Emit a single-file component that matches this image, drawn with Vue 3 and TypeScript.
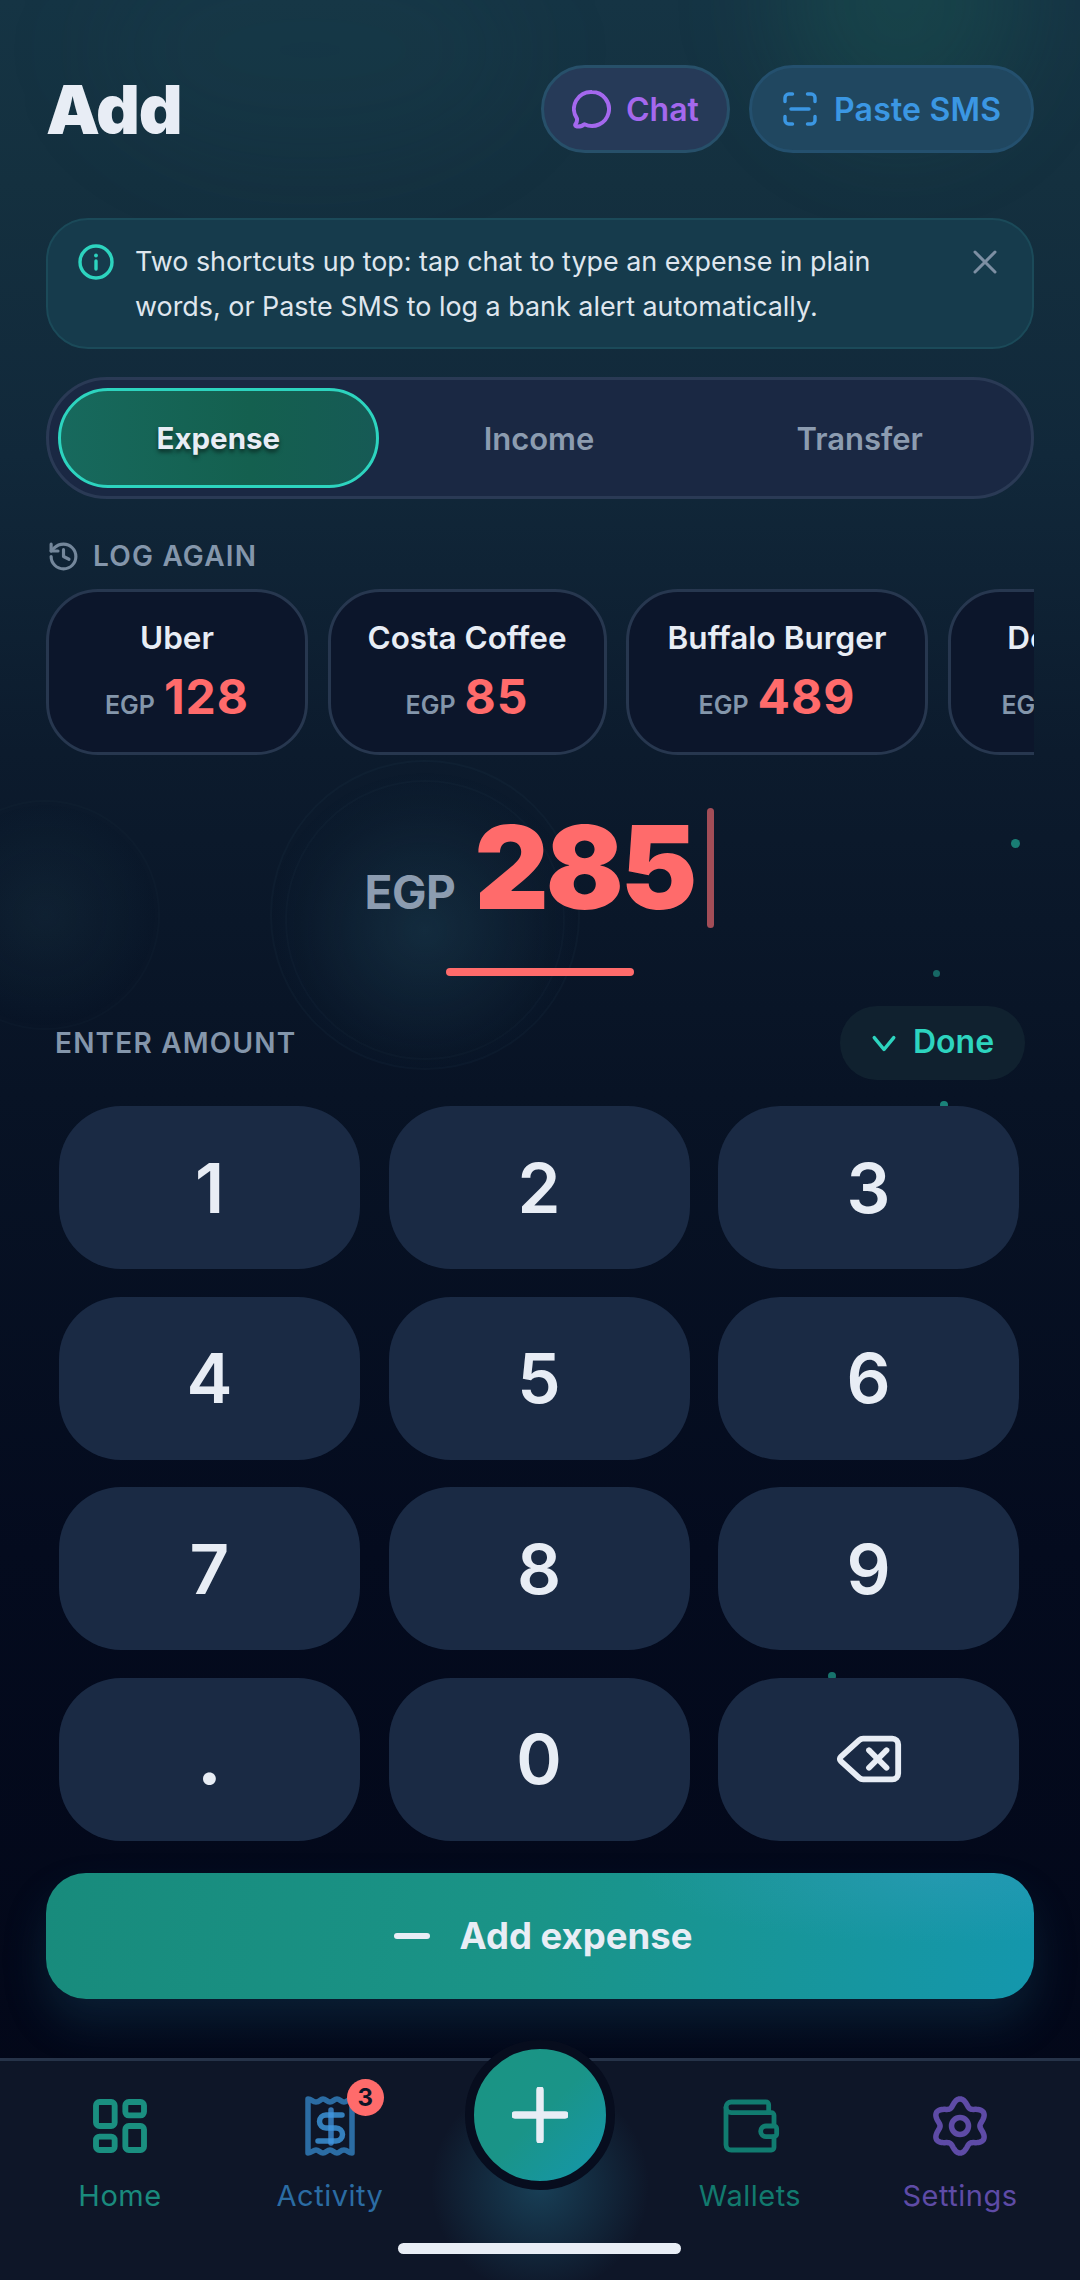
<script setup lang="ts">
const tabs: string[] = ['Expense', 'Income', 'Transfer']
const quick = [
  { name: 'Uber', amount: '128', w: 262 },
  { name: 'Costa Coffee', amount: '85', w: 279 },
  { name: 'Buffalo Burger', amount: '489', w: 302 },
  { name: 'Dominos', amount: '310', w: 254 },
]
const keys: string[] = ['1', '2', '3', '4', '5', '6', '7', '8', '9', '.', '0']
const dots = [
  { x: 1011, y: 839, s: 9, o: 0.75 },
  { x: 933, y: 970, s: 7, o: 0.6 },
  { x: 940, y: 1101, s: 8, o: 0.8 },
  { x: 828, y: 1672, s: 8, o: 0.7 },
]
function gearPath(): string {
  const pts: string[] = []
  for (let i = 0; i <= 180; i++) {
    const t = (i / 180) * Math.PI * 2
    const r = 23.5 + 3.6 * Math.cos(6 * t)
    const a = t - Math.PI / 2
    pts.push(`${(32 + r * Math.cos(a)).toFixed(2)} ${(32 + r * Math.sin(a)).toFixed(2)}`)
  }
  return 'M' + pts.join('L') + 'Z'
}
const gear = gearPath()
</script>

<template>
  <div class="screen">
    <div class="glow glow-a"></div>
    <div class="glow glow-b"></div>
    <div class="ring ring-a"></div>
    <div class="ring ring-b"></div>
    <div class="ring ring-c"></div>
    <span
      v-for="d in dots"
      :key="d.x"
      class="dot"
      :style="{ left: d.x + 'px', top: d.y + 'px', width: d.s + 'px', height: d.s + 'px', opacity: d.o }"
    ></span>

    <main class="main">
      <header class="head">
        <h1 class="title">Add</h1>
        <div class="head-actions">
          <button class="pill pill-chat">
            <svg class="i-chat" viewBox="0 0 40 40" fill="none" stroke="#a468ee" stroke-width="4" stroke-linejoin="round">
              <path d="M20 3a17 17 0 1 1-7.6 32.2c-1.6 1.5-4.6 2.5-7.6 2.3-1.6-.1-2-1.6-1.2-2.6 1.2-1.5 1.6-3.4 1.4-5.2A17 17 0 0 1 20 3Z" />
            </svg>
            <span>Chat</span>
          </button>
          <button class="pill pill-sms">
            <svg class="i-scan" viewBox="0 0 24 24" fill="none" stroke="#3b97e3" stroke-width="2.3" stroke-linecap="round" stroke-linejoin="round">
              <path d="M2 7V4.5A2.5 2.5 0 0 1 4.5 2H7M17 2h2.5A2.5 2.5 0 0 1 22 4.500V7M22 17v2.500a2.500 2.500 0 0 1-2.500 2.500H17M7 22H4.500A2.500 2.500 0 0 1 2 19.500V17M6 12h12" />
            </svg>
            <span>Paste SMS</span>
          </button>
        </div>
      </header>

      <section class="tip">
        <svg class="i-info" viewBox="0 0 36 36" fill="none" stroke="#2dd4bf" stroke-linecap="round">
          <circle cx="18" cy="18" r="16" stroke-width="3.400" />
          <path d="M18 17v8" stroke-width="3.400" />
          <circle cx="18" cy="11.500" r="1.300" fill="#2dd4bf" stroke-width="1.200" />
        </svg>
        <p class="tip-text">Two shortcuts up top: tap chat to type an expense in plain words, or Paste SMS to log a bank alert automatically.</p>
        <svg class="i-close" viewBox="0 0 24 24" fill="none" stroke="#7d8fa3" stroke-width="3" stroke-linecap="round">
          <path d="M2 2l20 20M22 2L2 22" />
        </svg>
      </section>

      <nav class="seg">
        <div v-for="(t, i) in tabs" :key="t" class="seg-item" :class="{ active: i === 0 }">{{ t }}</div>
      </nav>

      <div class="log-head">
        <svg class="i-history" viewBox="0 0 24 24" fill="none" stroke="#74879b" stroke-width="2.300" stroke-linecap="round" stroke-linejoin="round">
          <path d="M3 12a9 9 0 1 0 9-9 9.750 9.750 0 0 0-6.740 2.740L3 8" />
          <path d="M3 3v5h5" />
          <path d="M12 7v5l4 2" />
        </svg>
        <span>LOG AGAIN</span>
      </div>

      <div class="quick">
        <div v-for="q in quick" :key="q.name" class="quick-card" :style="{ width: q.w + 'px' }">
          <div class="quick-name">{{ q.name }}</div>
          <div class="quick-amt"><span class="quick-cur">EGP</span><span class="quick-num">{{ q.amount }}</span></div>
        </div>
      </div>

      <div class="amount">
        <span class="amount-cur">EGP</span>
        <span class="amount-num">285</span>
        <span class="caret"></span>
      </div>
      <div class="underline"></div>

      <div class="enter-row">
        <span class="enter-label">ENTER AMOUNT</span>
        <button class="done">
          <svg class="i-chev" viewBox="0 0 24 24" fill="none" stroke="#2dd4bf" stroke-width="3.200" stroke-linecap="round" stroke-linejoin="round">
            <path d="M3 7l9 11 9-11" />
          </svg>
          <span>Done</span>
        </button>
      </div>

      <div class="keypad">
        <button v-for="k in keys" :key="k" class="key">{{ k }}</button>
        <button class="key" aria-label="Delete">
          <svg class="i-del" viewBox="0 0 24 24" fill="none" stroke="#e8edf5" stroke-width="2" stroke-linecap="round" stroke-linejoin="round">
            <path d="M10 5a2 2 0 0 0-1.344.519l-6.328 5.740a1 1 0 0 0 0 1.481l6.328 5.740A2 2 0 0 0 10 19h10a2 2 0 0 0 2-2V7a2 2 0 0 0-2-2z" />
            <path d="m12 9 6 6" />
            <path d="m18 9-6 6" />
          </svg>
        </button>
      </div>

      <button class="submit">
        <span class="submit-minus"></span>
        <span>Add expense</span>
      </button>
    </main>

    <footer class="tabbar">
      <div class="tab tab-home">
        <svg class="tab-icon" viewBox="0 0 24 24" fill="none" stroke="#1a8f80" stroke-width="2.200" stroke-linejoin="round">
          <rect x="3" y="3" width="7" height="9" rx="1.300" />
          <rect x="14" y="3" width="7" height="5" rx="1.300" />
          <rect x="14" y="12" width="7" height="9" rx="1.300" />
          <rect x="3" y="16" width="7" height="5" rx="1.300" />
        </svg>
        <span>Home</span>
      </div>
      <div class="tab tab-activity">
        <div class="tab-icon-wrap">
          <svg class="tab-icon" viewBox="0 0 64 64" fill="none" stroke="rgba(56,148,224,.62)" stroke-width="5.500" stroke-linecap="round" stroke-linejoin="round">
            <path d="M10 5c4 0 4 3 8 3s4-3 7-3 4 3 7 3 4-3 7-3 4 3 7 3 4-3 8-3v54c-4 0-4-3-8-3s-4 3-7 3-4-3-7-3-4 3-7 3-4-3-7-3-4 3-8 3Z" stroke="#2b6ca3" />
            <path d="M44 21H28a6.500 6.500 0 0 0 0 13h10a6.500 6.500 0 0 1 0 13H20" stroke="#347fbc" />
            <path d="M33 16v33" stroke="rgba(66,150,225,.75)" />
          </svg>
          <span class="badge">3</span>
        </div>
        <span>Activity</span>
      </div>
      <div class="tab tab-spacer"></div>
      <div class="tab tab-wallets">
        <svg class="tab-icon" viewBox="0 0 24 24" fill="none" stroke="#117c70" stroke-width="1.800" stroke-linecap="round" stroke-linejoin="round">
          <path d="M19 7V4a1 1 0 0 0-1-1H5a2 2 0 0 0 0 4h15a1 1 0 0 1 1 1v4h-3a2 2 0 0 0 0 4h3a1 1 0 0 0 1-1v-2a1 1 0 0 0-1-1" />
          <path d="M3 5v14a2 2 0 0 0 2 2h15a1 1 0 0 0 1-1v-4" />
        </svg>
        <span>Wallets</span>
      </div>
      <div class="tab tab-settings">
        <svg class="tab-icon" viewBox="0 0 64 64" fill="none" stroke="#5e4ba6" stroke-width="5.500" stroke-linejoin="round">
          <path :d="gear" />
          <circle cx="32" cy="32" r="8.500" />
        </svg>
        <span>Settings</span>
      </div>

      <div class="fab-glow"></div>
      <button class="fab" aria-label="Add">
        <svg class="i-plus" viewBox="0 0 56 56" fill="none" stroke="#e8edf5" stroke-width="7.500" stroke-linecap="round">
          <path d="M28 3v50M3 28h50" />
        </svg>
      </button>
      <div class="home-bar"></div>
    </footer>
  </div>
</template>

<style>
html, body { margin: 0; background: #020617; }
</style>

<style scoped>
* { box-sizing: border-box; }
button { border: 0; padding: 0; background: none; font: inherit; color: inherit; }
p, h1 { margin: 0; }

.screen {
  position: relative;
  width: 1080px;
  height: 2280px;
  overflow: hidden;
  display: flex;
  flex-direction: column;
  font-family: Inter, "Noto Sans", sans-serif;
  color: #e8edf5;
  background: linear-gradient(180deg, #153444 0%, #14303f 8%, #11283a 20%, #0c1b2d 33%, #081325 48%, #040b1e 68%, #020617 100%);
}
.glow { position: absolute; border-radius: 50%; filter: blur(50px); pointer-events: none; }
.glow-a { left: 780px; top: -130px; width: 240px; height: 260px; background: rgba(30, 120, 95, .22); }
.glow-b { left: 100px; top: -60px; width: 420px; height: 220px; background: rgba(30, 90, 100, .1); }
.ring { position: absolute; border-radius: 50%; pointer-events: none; }
.ring-a {
  left: 270px; top: 760px; width: 310px; height: 310px;
  border: 2px solid rgba(120, 170, 190, .035);
  background: radial-gradient(circle at 50% 55%, rgba(50, 110, 130, .24), rgba(50, 110, 130, .03) 55%, transparent 70%);
}
.ring-b { left: -70px; top: 800px; width: 230px; height: 230px; border: 2px solid rgba(120, 170, 190, .025); background: radial-gradient(circle, rgba(60, 120, 130, .1), transparent 70%); }
.ring-c { left: 285px; top: 780px; width: 280px; height: 280px; border: 2px solid rgba(120, 170, 190, .03); }
.dot { position: absolute; border-radius: 50%; background: #1f9f8e; }

.main {
  position: relative;
  flex: 1;
  min-height: 0;
  padding: 65px 46px 0;
  display: flex;
  flex-direction: column;
}

.head { display: flex; align-items: center; justify-content: space-between; height: 88px; }
.title { font-size: 68px; font-weight: 900; letter-spacing: -1.200px; line-height: 1; color: #e8edf5; }
.head-actions { display: flex; gap: 19px; }
.pill {
  height: 88px;
  display: flex;
  align-items: center;
  border-radius: 44px;
  font-size: 32px;
  font-weight: 600;
  white-space: nowrap;
}
.pill-chat {
  width: 189px; padding-left: 28px; gap: 14px; color: #a468ee;
  background: #263a58; border: 3px solid #27506a;
}
.pill-sms {
  width: 285px; padding-left: 30px; gap: 16px; color: #3b97e3;
  background: #204760; border: 3px solid #24506e;
}
.pill-sms span { letter-spacing: .2px; }
.i-chat { width: 40px; height: 40px; flex: none; }
.i-scan { width: 36px; height: 36px; flex: none; }

.tip {
  position: relative;
  margin-top: 65px;
  height: 131px;
  border-radius: 42px;
  background: #163b4c;
  border: 2px solid #1b4a59;
  padding: 19px 0 0 87px;
}
.i-info { position: absolute; left: 30px; top: 24px; width: 36px; height: 36px; }
.tip-text { width: 800px; font-size: 26.900px; line-height: 45px; color: #dfe6ee; }
.i-close { position: absolute; left: 925px; top: 30px; width: 24px; height: 24px; }

.seg {
  margin-top: 28px;
  height: 122px;
  border-radius: 61px;
  background: #1a2843;
  border: 3px solid #2a3a55;
  padding: 8px 11px 8px 9px;
  display: grid;
  grid-template-columns: repeat(3, 1fr);
}
.seg-item {
  display: flex;
  align-items: center;
  justify-content: center;
  font-size: 31px;
  font-weight: 600;
  color: #8c9cb0;
  border-radius: 50px;
}
.seg-item.active {
  color: #e8edf5;
  font-size: 29.500px;
  font-weight: 700;
  background: linear-gradient(90deg, #17695d, #14604f 60%, #165a55);
  border: 3px solid #2dd4bf;
  text-shadow: 0 3px 4px rgba(0, 0, 0, .55);
}

.log-head {
  margin-top: 37px;
  height: 40px;
  display: flex;
  align-items: center;
  gap: 13px;
  padding-left: 1px;
  font-size: 28px;
  font-weight: 600;
  letter-spacing: 1.200px;
  color: #8496ab;
}
.i-history { width: 33px; height: 33px; flex: none; }

.quick { margin-top: 13px; display: flex; gap: 19.500px; overflow: hidden; height: 166px; }
.quick-card {
  flex: none;
  height: 166px;
  border-radius: 52px;
  background: #0c162b;
  border: 3px solid #27374f;
  display: flex;
  flex-direction: column;
  align-items: center;
  padding-top: 26px;
}
.quick-name { font-size: 31.500px; font-weight: 600; line-height: 40px; color: #e8edf5; white-space: nowrap; }
.quick-amt { margin-top: 13px; display: flex; align-items: baseline; gap: 9px; line-height: 52px; white-space: nowrap; }
.quick-cur { font-size: 25px; font-weight: 600; color: #8496ab; }
.quick-num { font-size: 48px; font-weight: 700; letter-spacing: 1px; color: #ff6b6b; }

.amount {
  margin-top: 53px;
  height: 120px;
  display: flex;
  align-items: center;
  justify-content: center;
  position: relative;
  padding-right: 1px;
}
.amount-cur { font-size: 46px; font-weight: 700; color: #8c9cb0; margin-top: 48px; margin-right: 19px; letter-spacing: -.5px; }
.amount-num { font-size: 115px; font-weight: 900; color: #ff6b6b; letter-spacing: -3px; line-height: 120px; margin-top: -1px; }
.caret { width: 7px; height: 120px; border-radius: 4px; background: #a24d57; margin-left: 13px; }
.underline { margin: 40px auto 0; width: 188px; height: 8px; border-radius: 4px; background: #ff6b6b; }

.enter-row {
  margin-top: 30px;
  height: 74px;
  padding: 0 9px;
  display: flex;
  align-items: center;
  justify-content: space-between;
}
.enter-label { font-size: 28px; font-weight: 600; letter-spacing: 1.200px; color: #8496ab; }
.done {
  width: 185px;
  height: 74px;
  border-radius: 37px;
  background: #10212f;
  color: #2dd4bf;
  font-size: 32px;
  font-weight: 600;
  display: flex;
  align-items: center;
  justify-content: center;
  gap: 16px;
}
.done span { margin-top: -3px; }
.i-chev { width: 26px; height: 26px; flex: none; }

.keypad {
  margin-top: 26px;
  padding: 0 13px;
  display: grid;
  grid-template-columns: repeat(3, 301px);
  grid-auto-rows: 163px;
  column-gap: 28.500px;
  row-gap: 27.500px;
}
.key {
  border-radius: 62px;
  background: #1a2a44;
  color: #e8edf5;
  font-size: 69px;
  font-weight: 600;
  display: flex;
  align-items: center;
  justify-content: center;
}
.key:nth-child(10) { font-weight: 800; }
.i-del { width: 70px; height: 70px; }

.submit {
  margin-top: 32px;
  height: 126px;
  border-radius: 40px;
  flex: none;
  color: #e8edf5;
  font-size: 36.500px;
  font-weight: 700;
  display: flex;
  align-items: center;
  justify-content: center;
  gap: 30px;
  padding-left: 6px;
  background:
    radial-gradient(ellipse 300px 70px at 90% 0%, rgba(70, 160, 200, .3), transparent),
    linear-gradient(100deg, #188b7c 0%, #1a9488 50%, #1497ad 100%);
  box-shadow: 0 24px 44px rgba(35, 110, 140, .22);
}
.submit-minus { width: 36px; height: 6px; border-radius: 3px; background: #e8edf5; }

.tabbar {
  position: relative;
  flex: none;
  height: 222px;
  background: #0e1628;
  border-top: 3px solid #263349;
  padding: 0 15px;
  display: grid;
  grid-template-columns: repeat(5, 210px);
}
.tab {
  display: flex;
  flex-direction: column;
  align-items: center;
  padding-top: 33px;
  font-size: 29px;
  font-weight: 400;
  letter-spacing: .5px;
  line-height: 36px;
}
.tab > span { margin-top: 20px; }
.tab-icon { width: 64px; height: 64px; display: block; }
.tab-icon-wrap { position: relative; width: 64px; height: 64px; }
.tab-home { color: #1a8a7d; }
.tab-activity { color: #2b6ca3; }
.tab-wallets { color: #127a6e; }
.tab-settings { color: #5e4ba6; }
.badge {
  position: absolute;
  left: 49px;
  top: -15px;
  width: 37px;
  height: 37px;
  border-radius: 50%;
  background: #ff6b6b;
  color: #0c1427;
  font-size: 24px;
  font-weight: 700;
  display: flex;
  align-items: center;
  justify-content: center;
}
.fab-glow {
  position: absolute;
  left: 425px;
  top: 20px;
  width: 230px;
  height: 210px;
  border-radius: 50%;
  background: radial-gradient(circle, rgba(38, 120, 150, .42), transparent 70%);
}
.fab {
  position: absolute;
  left: 465px;
  top: -21px;
  width: 150px;
  height: 150px;
  border-radius: 50%;
  border: 9px solid #070d1e;
  background: linear-gradient(135deg, #1a9483 0%, #1a9488 50%, #1497ad 100%);
  display: flex;
  align-items: center;
  justify-content: center;
}
.i-plus { width: 56px; height: 56px; }
.home-bar {
  position: absolute;
  left: 398px;
  top: 182px;
  width: 283px;
  height: 11px;
  border-radius: 6px;
  background: #e8edf5;
}
</style>
